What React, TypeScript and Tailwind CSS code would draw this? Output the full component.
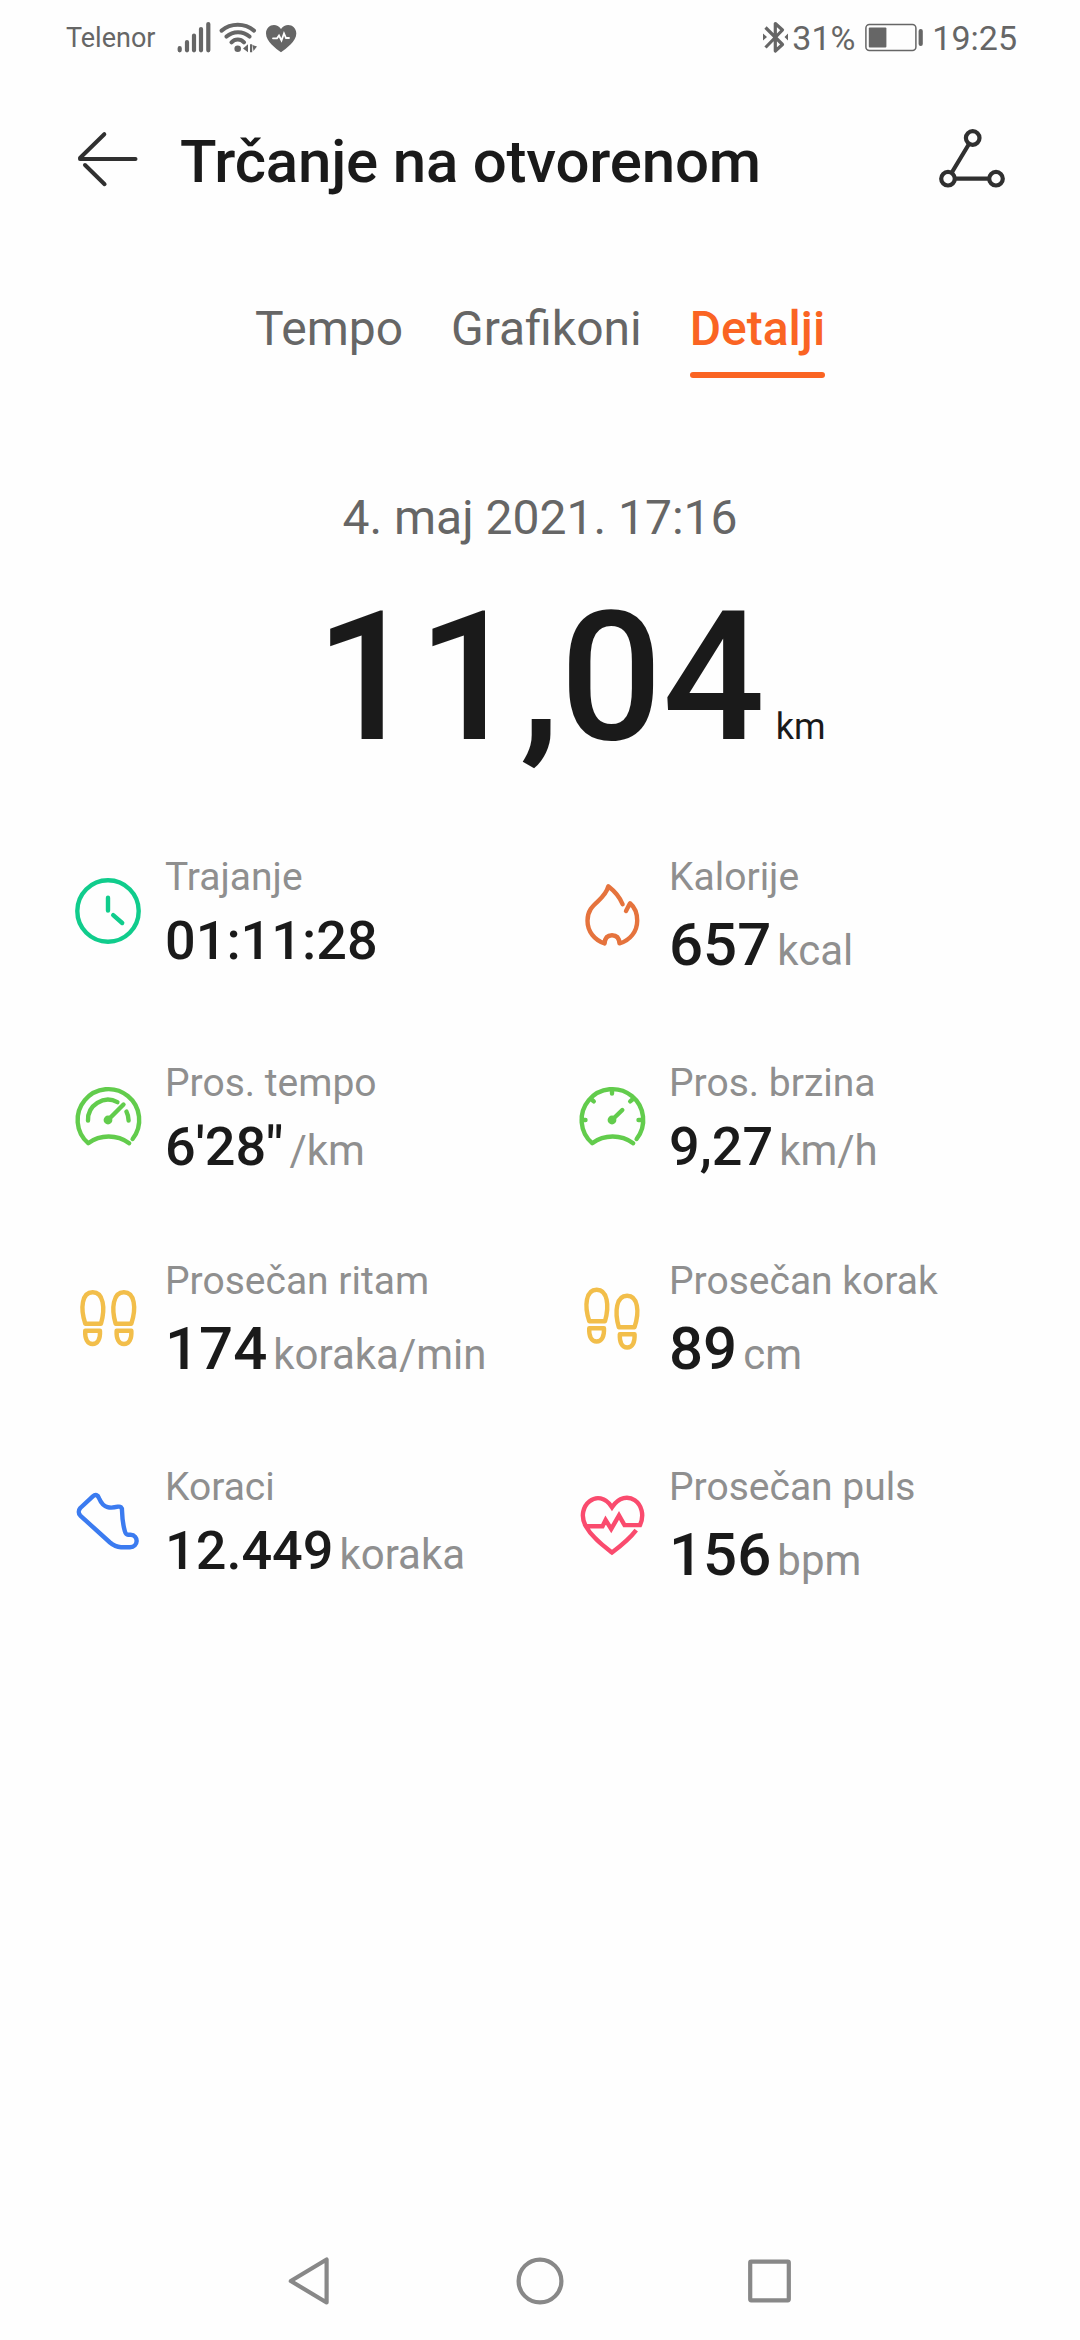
import type { ReactNode } from 'react';
import clsx from 'clsx';

type Metric = {
  id: string;
  label: string;
  value: string;
  unit?: string;
  large?: boolean;
  color: string;
  icon: ReactNode;
};

const footLeft = (
  <>
    <path d="M13.3 65.7H29C33.5 50 31.5 34.3 20.7 34.3S8 50 13.3 65.7Z" />
    <path d="M13.2 72.8H28C28.4 81 25.8 86 20.6 86S12.8 81 13.2 72.8Z" />
  </>
);

const footRight = (
  <>
    <path d="M59.3 65.7H43.6C39.1 50 41.1 34.3 51.9 34.3S64.6 50 59.3 65.7Z" />
    <path d="M59.4 72.8H44.6C44.2 81 46.8 86 52 86S59.8 81 59.4 72.8Z" />
  </>
);

const metrics: Metric[] = [
  {
    id: 'duration',
    label: 'Trajanje',
    value: '01:11:28',
    color: 'text-[#10cc8c]',
    icon: (
      <>
        <circle cx="36" cy="57" r="30.7" />
        <path d="M36 43.8V56.6M41.2 61.2L50.2 69" />
      </>
    ),
  },
  {
    id: 'calories',
    label: 'Kalorije',
    value: '657',
    unit: 'kcal',
    large: true,
    color: 'text-[#e5733d]',
    icon: (
      <path d="M46.6 50.2C43.5 42.5 39 37.5 32.3 32.3C28.5 48 11.5 48.5 11.5 66.7C11.5 77.5 18.5 86 28.6 89.4C28.9 84.2 31.5 81.3 36 81.3S43.2 84.2 43.5 89.4C54 86.5 61.2 77.5 61.2 66.7C61.2 60 59 53.5 54 49.3L50 57" />
    ),
  },
  {
    id: 'pace',
    label: 'Pros. tempo',
    value: '6\'28"',
    unit: '/km',
    color: 'text-[#62cc4c]',
    icon: (
      <>
        <path d="M60.6 79A30.8 30.8 0 1 0 16.2 83.2A34.7 34.7 0 0 1 57.2 83.3" />
        <path d="M16 60.6A20 20 0 0 1 45.4 42.1M54.4 51.6A20 20 0 0 1 56.6 60.6M36 60L51.5 44.5" />
        <circle cx="36" cy="60" r="4.4" fill="currentColor" stroke="none" />
      </>
    ),
  },
  {
    id: 'speed',
    label: 'Pros. brzina',
    value: '9,27',
    unit: 'km/h',
    color: 'text-[#62cc4c]',
    icon: (
      <>
        <path d="M60.6 79A30.8 30.8 0 1 0 16.2 83.2A34.7 34.7 0 0 1 57.2 83.3" />
        <path d="M36 60L46.3 50M36 30V33.5M6 60H9.5M62.5 60H66M15 39L17.8 41.4M57 39L54.2 41.4" />
        <circle cx="36" cy="60" r="4.4" fill="currentColor" stroke="none" />
      </>
    ),
  },
  {
    id: 'cadence',
    label: 'Prosečan ritam',
    value: '174',
    unit: 'koraka/min',
    large: true,
    color: 'text-[#f2be4a]',
    icon: (
      <>
        {footLeft}
        {footRight}
      </>
    ),
  },
  {
    id: 'stride',
    label: 'Prosečan korak',
    value: '89',
    unit: 'cm',
    large: true,
    color: 'text-[#f2be4a]',
    icon: (
      <>
        <g transform="translate(0 -2.5)">{footLeft}</g>
        <g transform="translate(-0.8 3.5)">{footRight}</g>
      </>
    ),
  },
  {
    id: 'steps',
    label: 'Koraci',
    value: '12.449',
    unit: 'koraka',
    color: 'text-[#3b7bf0]',
    icon: (
      <path d="M20.8 32.3L8.3 44C6.3 46.3 6.3 49.5 8.3 51.6L38 78.5C41.5 81.5 45 83 49 83.2H58C66.5 83.2 67 71 58.5 70.8H56C54 70.8 53.5 69.5 52.8 67C50.5 59 50.2 53 50 46.5C50 43.2 48.5 42.3 46 42.7C39 44.3 31.5 45 27.2 34.5C25.8 30.8 23.5 30 20.8 32.3Z" />
    ),
  },
  {
    id: 'pulse',
    label: 'Prosečan puls',
    value: '156',
    unit: 'bpm',
    large: true,
    color: 'text-[#fa4b6e]',
    icon: (
      <path
        strokeLinecap="butt"
        strokeLinejoin="miter"
        d="M60.2 66.2C53.5 75 45.5 81.5 36 88.5C27 81.5 16 73.5 9.8 62.2C-1.5 42 22.5 22 36 43.2C50 22 73.5 40 64 61.1H48.5L43 51.5L35.2 65L29.6 56L26.5 62.2H9.8"
      />
    ),
  },
];

const tabs = ['Tempo', 'Grafikoni', 'Detalji'];

function StatusBar() {
  return (
    <div className="flex h-[76px] items-center text-[#666]">
      <span className="ml-[66px] w-[110px] text-[27px] leading-8">Telenor</span>
      <svg viewBox="176 18 124 40" className="h-10 w-[124px]" fill="none" stroke="currentColor" strokeLinecap="round">
        <g strokeWidth="4.2">
          <path d="M179.7 48.2V50.3M187 42V50.3M194 35.5V50.3M201 29V50.3M208.3 24V50.3" />
        </g>
        <g strokeWidth="4">
          <path d="M221.6 30.6C231 22.8 244.5 22.8 254 30.6M226.5 36.6C233 30.8 243 30.8 249.5 36.6M231.5 42.3C235 38.5 240.5 38.5 244 42.3" />
        </g>
        <circle cx="237.7" cy="48.7" r="3.3" fill="currentColor" stroke="none" />
        <path d="M243 48.6L248 44.3V52.3ZM250 44.3H252.2V52.3H250ZM252.5 45L257 46.6L253.5 51Z" fill="currentColor" stroke="none" />
        <path
          d="M281 52.3C276 48.5 266 41.5 266 33.5C266 24.5 276.5 22 281 29C285.5 22 296.3 24.5 296.3 33.5C296.3 41.5 286 48.5 281 52.3Z"
          fill="currentColor"
          stroke="none"
        />
        <path d="M273 38.3H277L279 35.5L281.5 40.5L284 33.5L286 38H289" stroke="white" strokeWidth="1.8" />
      </svg>
      <svg viewBox="760 18 30 40" className="ml-auto h-10 w-[30px]" fill="none" stroke="currentColor">
        <path d="M765.5 27.5L782.5 44.5L775.3 51V23.5L782.5 30L765.5 47.5" strokeWidth="3.2" strokeLinejoin="round" />
        <path d="M763 33.5L767 37L763 40.5ZM788 33.5L784.5 37L788 40.5Z" fill="currentColor" stroke="none" />
      </svg>
      <span className="ml-0.5 w-[72px] text-[34px] leading-10">31%</span>
      <svg viewBox="863 18 60 40" className="h-10 w-[60px]" fill="none" stroke="currentColor">
        <rect x="864.9" y="24.5" width="50" height="26" rx="3.5" strokeWidth="1.5" />
        <rect x="867.8" y="27.6" width="17.6" height="19.8" rx="1" fill="currentColor" stroke="none" />
        <rect x="917.6" y="29" width="4.2" height="17" rx="2" fill="currentColor" stroke="none" />
      </svg>
      <span className="mr-[63px] ml-2 text-[34px] leading-10">19:25</span>
    </div>
  );
}

function Header() {
  return (
    <header className="mt-[47px] flex h-[72px] items-center px-[72px] text-[#303030]">
      <svg viewBox="0 0 72 72" className="size-[72px]" fill="none" stroke="currentColor" strokeWidth="4" strokeLinecap="round">
        <path d="M32.3 11.2L8 35M8 36H63.5M32.6 61.2L13 42" />
      </svg>
      <h1 className="ml-9 pt-[5px] text-[60px] leading-[70px] font-medium tracking-[-0.2px] text-[#1a1a1a]">Trčanje na otvorenom</h1>
      <svg viewBox="0 0 72 72" className="ml-auto size-[72px]" fill="none" stroke="currentColor" strokeWidth="4.2">
        <circle cx="36.7" cy="15" r="6.8" />
        <circle cx="12" cy="55.7" r="6.8" />
        <circle cx="60" cy="55.7" r="6.8" />
        <path d="M33 21L15.5 50M19 55.7H53" />
      </svg>
    </header>
  );
}

function MetricCell({ metric }: { metric: Metric }) {
  return (
    <div className="flex items-start">
      <svg
        viewBox="0 0 72 118"
        className={clsx('h-[118px] w-[72px] shrink-0', metric.color)}
        fill="none"
        stroke="currentColor"
        strokeWidth="4.4"
        strokeLinecap="round"
        strokeLinejoin="round"
      >
        {metric.icon}
      </svg>
      <div className="ml-[21px]">
        <div className="text-[39px] leading-[46px] text-[#8f8f8f]">{metric.label}</div>
        <div className={clsx('flex items-baseline gap-1.5', metric.large ? 'mt-2.5 h-[70px] leading-[70px]' : 'mt-[9px] h-[63px] leading-[64px]')}>
          <span className={clsx('font-medium text-[#1a1a1a]', metric.large ? 'text-[60px]' : 'text-[54px]')}>{metric.value}</span>
          {metric.unit && <span className="text-[42px] leading-none text-[#8f8f8f]">{metric.unit}</span>}
        </div>
      </div>
    </div>
  );
}

export default function App() {
  return (
    <div className="flex h-[2340px] w-[1080px] flex-col bg-[#fefefe] font-['Roboto',sans-serif]">
      <StatusBar />
      <Header />

      <nav className="mt-[106px] flex justify-center gap-12 text-5xl leading-[56px] text-[#666]">
        {tabs.map((tab) => (
          <div key={tab} className={clsx('h-[77px]', tab === 'Detalji' && 'font-medium text-[#fa6423]')}>
            {tab}
            {tab === 'Detalji' && <div className="mt-[15px] h-1.5 rounded-full bg-[#fa6423]" />}
          </div>
        ))}
      </nav>

      <div className="mt-[112px] text-center text-5xl leading-[56px] text-[#666]">4. maj 2021. 17:16</div>

      <div className="mt-[26px] flex h-[211px] items-baseline justify-center text-[#1a1a1a]">
        <span className="text-[180px] leading-[212px] font-medium">11,04</span>
        {/* the unit hangs to the right so that the number itself stays centred */}
        <span className="-mr-[73px] ml-[11px] w-[62px] text-4xl leading-none">km</span>
      </div>

      <section className="mt-[71px] grid grid-cols-[504px_504px] gap-y-20 pl-[72px]">
        {metrics.map((metric) => (
          <MetricCell key={metric.id} metric={metric} />
        ))}
      </section>

      <div className="mt-auto flex h-[118px] items-center justify-center gap-[158px] text-[#888]">
        <svg viewBox="0 0 72 72" className="size-[72px]" fill="none" stroke="currentColor" strokeWidth="4.2" strokeLinejoin="round">
          <path d="M16.8 36L52.6 14.5V57.5Z" />
        </svg>
        <svg viewBox="0 0 72 72" className="size-[72px]" fill="none" stroke="currentColor" strokeWidth="4.2">
          <circle cx="36" cy="36" r="21.4" />
        </svg>
        <svg viewBox="0 0 72 72" className="size-[72px]" fill="none" stroke="currentColor" strokeWidth="4.2" strokeLinejoin="round">
          <rect x="16.2" y="16.7" width="38.6" height="38.6" rx="1" />
        </svg>
      </div>
    </div>
  );
}
